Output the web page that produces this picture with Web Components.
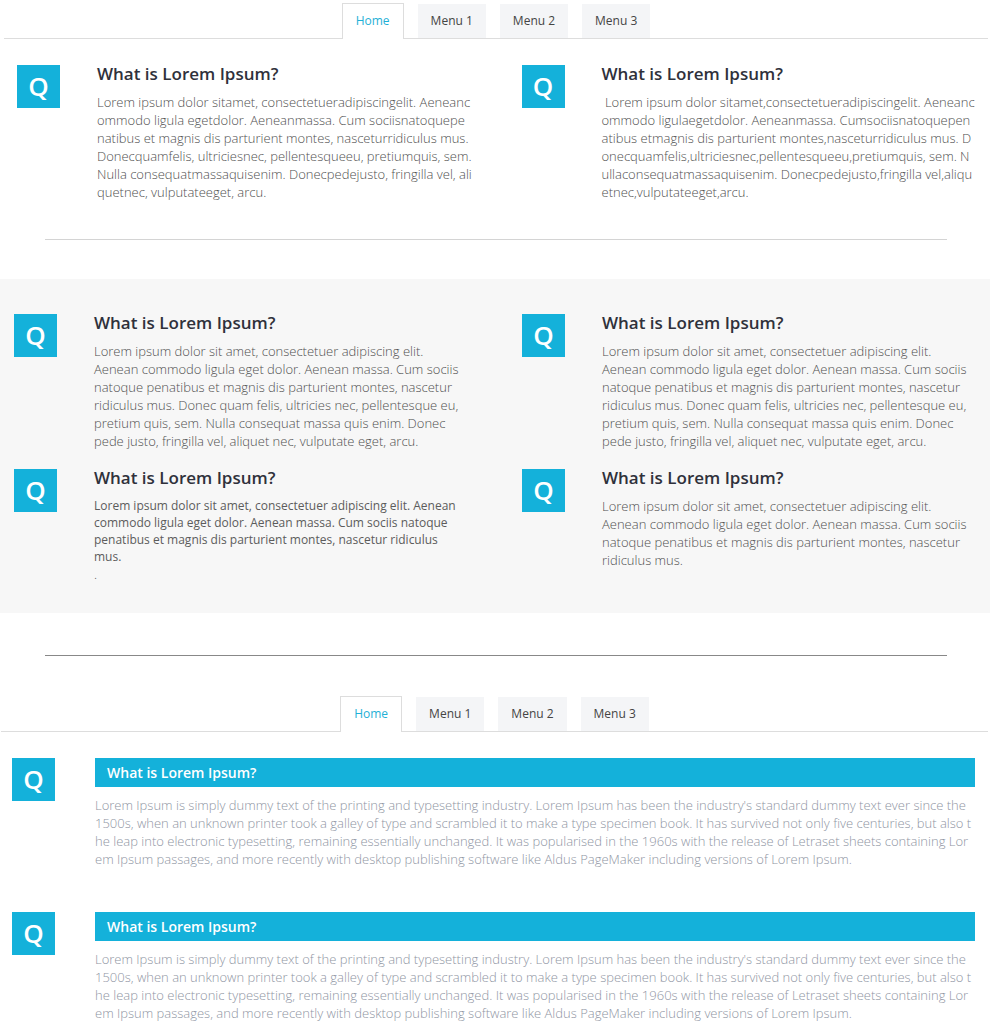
<!DOCTYPE html>
<html lang="en">
<head>
<meta charset="utf-8">
<title>FAQ</title>
<style>
  body { margin: 0; background: #fff; color: #505050; font: 300 13px/18px "Open Sans", sans-serif; }
</style>
</head>
<body>
<faq-page></faq-page>

<template id="tab-bar">
  <style>
    :host { display: block; }
    nav { display: flex; justify-content: center; align-items: flex-end; gap: 14px; border-bottom: 1px solid #ddd; }
    a { box-sizing: border-box; height: 34px; padding: 0 13px; background: #f4f5f7; color: #444; font-size: 12px; font-weight: 400; line-height: 33px; text-decoration: none; }
    a[aria-current] { height: 36px; margin-bottom: -1px; border: 1px solid #ddd; border-bottom: 0; background: #fff; color: #1fb0d6; }
  </style>
  <nav>
    <a href="#home" aria-current="page">Home</a>
    <a href="#menu1">Menu 1</a>
    <a href="#menu2">Menu 2</a>
    <a href="#menu3">Menu 3</a>
  </nav>
</template>

<template id="faq-item">
  <style>
    :host { display: grid; grid-template-columns: 43px minmax(0, 1fr); column-gap: 37px; align-items: start; }
    .mark { height: 43px; background: #14b1da; color: #fff; font-size: 26px; font-weight: 600; line-height: 43px; text-align: center; }
    h3 { margin: 0 0 10px; color: #2f313b; font-size: 17px; font-weight: 600; line-height: 18px; }
    .text { white-space: nowrap; }
    :host([variant="bar"]) { column-gap: 40px; color: #8f95a3; }
    :host([variant="bar"]) h3 { margin-bottom: 9px; padding: 0 12px; background: #14b1da; color: #fff; font-size: 14px; line-height: 29px; }
  </style>
  <div class="mark">Q</div>
  <div>
    <h3><slot name="title"></slot></h3>
    <div class="text"><slot></slot></div>
  </div>
</template>

<template id="faq-page">
  <style>
    :host { display: block; }
    .first-tabs { padding: 3px 2px 0 4px; }
    .second-tabs { margin-top: 40px; padding: 0 2px 0 1px; }
    .grid { display: grid; grid-template-columns: repeat(2, minmax(0, 1fr)); }
    .intro { column-gap: 38px; padding: 26px 2px 38px 17px; }
    .shaded { gap: 19px 40px; margin-top: 39px; padding: 35px 0 30px 14px; background: #f7f7f7; }
    .list { display: grid; grid-template-columns: minmax(0, 1fr); row-gap: 44px; padding: 26px 15px 0 12px; }
    hr { height: 1px; margin: 0 43px 0 45px; border: 0; background: #d4d4d4; }
    hr.dark { margin-top: 42px; background: #888; }
    p { margin: 0; }
    .regular { color: #5c5c5c; font-size: 12px; font-weight: 400; line-height: 17px; }
  </style>
  <tab-bar class="first-tabs"></tab-bar>
  <section class="grid intro">
    <faq-item><span slot="title">What is Lorem Ipsum?</span>
      <p>Lorem ipsum dolor sitamet, consectetueradipiscingelit. Aeneanc<br>ommodo ligula egetdolor. Aeneanmassa. Cum sociisnatoquepe<br>natibus et magnis dis parturient montes, nasceturridiculus mus.<br>Donecquamfelis, ultriciesnec, pellentesqueeu, pretiumquis, sem.<br>Nulla consequatmassaquisenim. Donecpedejusto, fringilla vel, ali<br>quetnec, vulputateeget, arcu.</p>
    </faq-item>
    <faq-item><span slot="title">What is Lorem Ipsum?</span>
      <p>&nbsp;Lorem ipsum dolor sitamet,consectetueradipiscingelit. Aeneanc<br>ommodo ligulaegetdolor. Aeneanmassa. Cumsociisnatoquepen<br>atibus etmagnis dis parturient montes,nasceturridiculus mus. D<br>onecquamfelis,ultriciesnec,pellentesqueeu,pretiumquis, sem. N<br>ullaconsequatmassaquisenim. Donecpedejusto,fringilla vel,aliqu<br>etnec,vulputateeget,arcu.</p>
    </faq-item>
  </section>
  <hr>
  <section class="grid shaded">
    <faq-item><span slot="title">What is Lorem Ipsum?</span>
      <p>Lorem ipsum dolor sit amet, consectetuer adipiscing elit.<br>Aenean commodo ligula eget dolor. Aenean massa. Cum sociis<br>natoque penatibus et magnis dis parturient montes, nascetur<br>ridiculus mus. Donec quam felis, ultricies nec, pellentesque eu,<br>pretium quis, sem. Nulla consequat massa quis enim. Donec<br>pede justo, fringilla vel, aliquet nec, vulputate eget, arcu.</p>
    </faq-item>
    <faq-item><span slot="title">What is Lorem Ipsum?</span>
      <p>Lorem ipsum dolor sit amet, consectetuer adipiscing elit.<br>Aenean commodo ligula eget dolor. Aenean massa. Cum sociis<br>natoque penatibus et magnis dis parturient montes, nascetur<br>ridiculus mus. Donec quam felis, ultricies nec, pellentesque eu,<br>pretium quis, sem. Nulla consequat massa quis enim. Donec<br>pede justo, fringilla vel, aliquet nec, vulputate eget, arcu.</p>
    </faq-item>
    <faq-item><span slot="title">What is Lorem Ipsum?</span>
      <p class="regular">Lorem ipsum dolor sit amet, consectetuer adipiscing elit. Aenean<br>commodo ligula eget dolor. Aenean massa. Cum sociis natoque<br>penatibus et magnis dis parturient montes, nascetur ridiculus<br>mus.</p>
      <p>.</p>
    </faq-item>
    <faq-item><span slot="title">What is Lorem Ipsum?</span>
      <p>Lorem ipsum dolor sit amet, consectetuer adipiscing elit.<br>Aenean commodo ligula eget dolor. Aenean massa. Cum sociis<br>natoque penatibus et magnis dis parturient montes, nascetur<br>ridiculus mus.</p>
    </faq-item>
  </section>
  <hr class="dark">
  <tab-bar class="second-tabs"></tab-bar>
  <section class="list">
    <faq-item variant="bar"><span slot="title">What is Lorem Ipsum?</span>
      <p>Lorem Ipsum is simply dummy text of the printing and typesetting industry. Lorem Ipsum has been the industry's standard dummy text ever since the<br>1500s, when an unknown printer took a galley of type and scrambled it to make a type specimen book. It has survived not only five centuries, but also t<br>he leap into electronic typesetting, remaining essentially unchanged. It was popularised in the 1960s with the release of Letraset sheets containing Lor<br>em Ipsum passages, and more recently with desktop publishing software like Aldus PageMaker including versions of Lorem Ipsum.</p>
    </faq-item>
    <faq-item variant="bar"><span slot="title">What is Lorem Ipsum?</span>
      <p>Lorem Ipsum is simply dummy text of the printing and typesetting industry. Lorem Ipsum has been the industry's standard dummy text ever since the<br>1500s, when an unknown printer took a galley of type and scrambled it to make a type specimen book. It has survived not only five centuries, but also t<br>he leap into electronic typesetting, remaining essentially unchanged. It was popularised in the 1960s with the release of Letraset sheets containing Lor<br>em Ipsum passages, and more recently with desktop publishing software like Aldus PageMaker including versions of Lorem Ipsum.</p>
    </faq-item>
  </section>
</template>

<script>
  class TemplateElement extends HTMLElement {
    constructor() {
      super();
      const template = document.getElementById(this.localName);
      this.attachShadow({ mode: "open" }).append(template.content.cloneNode(true));
    }
  }
  customElements.define("tab-bar", class extends TemplateElement {});
  customElements.define("faq-item", class extends TemplateElement {});
  customElements.define("faq-page", class extends TemplateElement {});
</script>
</body>
</html>
